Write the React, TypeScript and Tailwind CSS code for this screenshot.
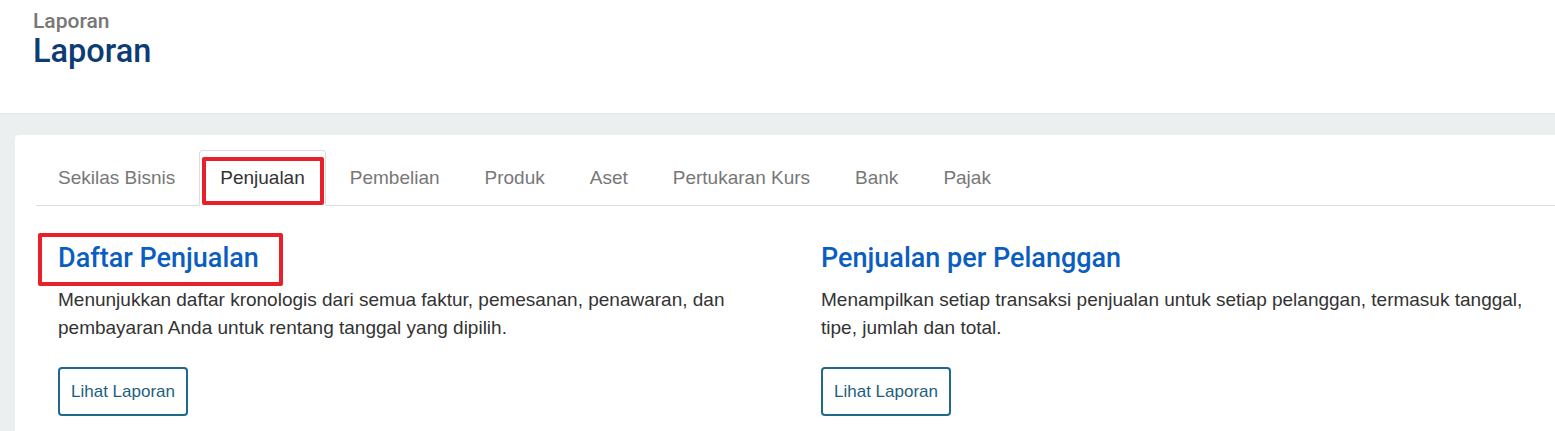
import React from 'react';

const tabs = ['Sekilas Bisnis', 'Penjualan', 'Pembelian', 'Produk', 'Aset', 'Pertukaran Kurs', 'Bank', 'Pajak'];

const reports = [
  {
    title: 'Daftar Penjualan',
    desc: 'Menunjukkan daftar kronologis dari semua faktur, pemesanan, penawaran, dan pembayaran Anda untuk rentang tanggal yang dipilih.',
    marked: true,
  },
  {
    title: 'Penjualan per Pelanggan',
    desc: 'Menampilkan setiap transaksi penjualan untuk setiap pelanggan, termasuk tanggal, tipe, jumlah dan total.',
    marked: false,
  },
];

const App: React.FC = () => {
  return (
    <div className="min-h-screen w-[1555px] overflow-hidden bg-[#eceff0] font-['Liberation_Sans',Arial,sans-serif]">
      {/* header */}
      <div className="h-[114px] bg-white border-b border-[#e2e6e8] pl-[33px] pt-[8px] font-['Roboto',sans-serif]">
        <div className="text-[21px] leading-[26px] font-medium text-[#777777]">Laporan</div>
        <h1 className="text-[32.5px] leading-[34px] font-medium text-[#0d3b73]">Laporan</h1>
      </div>

      <div className="pt-[21px] pl-[15px]">
        <div className="w-[1620px] bg-white rounded-tl-[4px] pl-[21px] pt-[15px] pb-[40px]">
          {/* tabs */}
          <ul className="flex border-b border-[#dddddd] pl-px">
            {tabs.map(t => (
              <li
                key={t}
                className={`relative -mb-px mr-[3px] px-5 h-[56px] flex items-center text-[19px] border rounded-t-[4px] ${
                  t === 'Penjualan'
                    ? 'border-[#dddddd] border-b-white text-[#333333] bg-white'
                    : 'border-transparent text-[#777777]'
                }`}
              >
                {t}
                {t === 'Penjualan' && (
                  <span className="absolute left-[2px] right-[1px] top-[6px] bottom-0 border-[4px] border-[#e8202a] rounded-[2px]" />
                )}
              </li>
            ))}
          </ul>

          {/* reports */}
          <div className="grid grid-cols-[763px_763px] pl-[22px] pt-[36px]">
            {reports.map(r => (
              <div key={r.title} className="pr-[30px]">
                <h3 className="font-['Roboto',sans-serif] text-[27px] leading-[32px] font-medium text-[#0b5ec1]">
                  <span className="relative">
                    {r.title}
                    {r.marked && (
                      <span className="absolute -left-[20px] -right-[24px] -top-[9px] -bottom-[12px] border-[4px] border-[#e8202a] rounded-[2px]" />
                    )}
                  </span>
                </h3>
                <p className="mt-[12px] text-[19px] leading-[28px] text-[#333333]">{r.desc}</p>
                <button className="mt-[25px] h-[49px] px-[11px] border-2 border-[#1f6a89] rounded-[4px] text-[17px] text-[#1d5f7e] bg-white">
                  Lihat Laporan
                </button>
              </div>
            ))}
          </div>
        </div>
      </div>
    </div>
  );
};

export default App;
